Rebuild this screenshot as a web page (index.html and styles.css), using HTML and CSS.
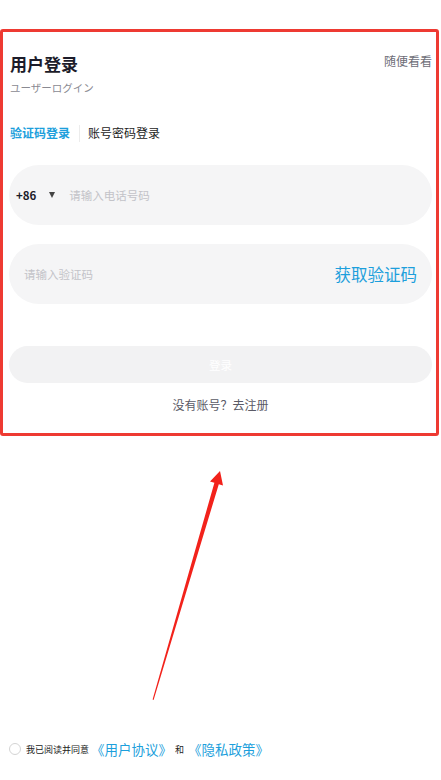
FILE: index.html
```html
<!DOCTYPE html>
<html lang="zh-CN">
<head>
    <meta charset="UTF-8">
    <meta name="viewport" content="width=device-width, initial-scale=1.0">
    <title>用户登录</title>
    <link rel="stylesheet" href="styles.css">
</head>
<body>
    <div class="page">
        <div class="login">
            <div class="header">
                <div class="title">用户登录</div>
                <div class="browse">随便看看</div>
            </div>
            <div class="subtitle">ユーザーログイン</div>

            <div class="tabs">
                <span class="tab active">验证码登录</span>
                <span class="divider"></span>
                <span class="tab">账号密码登录</span>
            </div>

            <div class="field phone">
                <span class="code">+86</span>
                <span class="caret"></span>
                <span class="placeholder">请输入电话号码</span>
            </div>

            <div class="field verify">
                <span class="placeholder">请输入验证码</span>
                <span class="get-code">获取验证码</span>
            </div>

            <button class="submit">登录</button>

            <div class="register">没有账号？去注册</div>
        </div>

        <div class="agreement">
            <span class="radio"></span>
            <span class="small">我已阅读并同意</span>
            <span class="link">《用户协议》</span>
            <span class="small and">和</span>
            <span class="link">《隐私政策》</span>
        </div>
    </div>

    <!-- annotation overlay -->
    <div class="frame"></div>
    <svg class="arrow" width="441" height="780" viewBox="0 0 441 780">
        <polygon fill="#f2221b" points="220,471 223,485.5 218.8,484.2 153.6,700 152.6,699.6 214.4,482.8 210,481.6"/>
    </svg>
</body>
</html>
```

FILE: styles.css
```css
body {
    margin: 0;
    font-family: "Noto Sans CJK SC", "Noto Sans", sans-serif;
    background: #fff;
    color: #1c1c2a;
}

.page {
    min-height: 100vh;
    display: flex;
    flex-direction: column;
    box-sizing: border-box;
    padding-bottom: 21px;
}

.login {
    padding: 52px 9px 0 9px;
}

.header {
    display: flex;
    justify-content: space-between;
    align-items: flex-start;
    padding-left: 1px;
}

.title {
    font-size: 17px;
    line-height: 24px;
    font-weight: bold;
}

.browse {
    font-size: 12px;
    line-height: 18px;
    color: #6e6e78;
}

.subtitle {
    margin-top: 4px;
    padding-left: 1px;
    font-size: 10.5px;
    line-height: 16px;
    color: #8a8a92;
}

.tabs {
    margin-top: 27px;
    display: flex;
    align-items: center;
    padding-left: 1px;
    height: 20px;
}

.tab {
    font-size: 12px;
    line-height: 20px;
    color: #1c1c1c;
}

.tab.active {
    color: #1d9fdc;
    font-weight: bold;
}

.divider {
    width: 1px;
    height: 17px;
    background: #ececec;
    margin: 0 8px 0 9px;
}

.field {
    height: 60px;
    border-radius: 30px;
    background: #f5f5f6;
    display: flex;
    align-items: center;
    box-sizing: border-box;
}

.phone {
    margin-top: 22px;
    padding-left: 7px;
}

.verify {
    margin-top: 19px;
    padding: 0 15px 0 15px;
    justify-content: space-between;
}

.code {
    font-size: 11.5px;
    font-weight: bold;
    color: #1c1c2a;
}

.caret {
    width: 0;
    height: 0;
    border-left: 3px solid transparent;
    border-right: 3px solid transparent;
    border-top: 6px solid #444;
    margin: 0 14px 0 13px;
}

.placeholder {
    font-size: 11.5px;
    color: #c3c3c8;
}

.get-code {
    font-size: 16.5px;
    color: #1d9fdc;
}

.submit {
    display: block;
    width: 100%;
    height: 37px;
    margin-top: 42px;
    border: none;
    border-radius: 19px;
    background: #f2f2f3;
    color: #fff;
    font-family: inherit;
    font-size: 11.5px;
}

.register {
    margin-top: 13px;
    text-align: center;
    font-size: 12px;
    line-height: 18px;
    color: #5a5a66;
}

.agreement {
    margin-top: auto;
    display: flex;
    align-items: center;
    height: 20px;
    padding-left: 9px;
}

.radio {
    width: 10px;
    height: 10px;
    border: 1px solid #d4d4d4;
    border-radius: 50%;
    margin-right: 5px;
}

.small {
    font-size: 9px;
    color: #222;
}

.and {
    margin: 0 2px 0 3px;
}

.link {
    font-size: 13.5px;
    color: #1d9fdc;
    margin-left: 2px;
}

.frame {
    position: absolute;
    left: 0;
    top: 29px;
    width: 433px;
    height: 401px;
    border: 3px solid #ee3a32;
    border-radius: 3px;
}

.arrow {
    position: absolute;
    left: 0;
    top: 0;
}
```
